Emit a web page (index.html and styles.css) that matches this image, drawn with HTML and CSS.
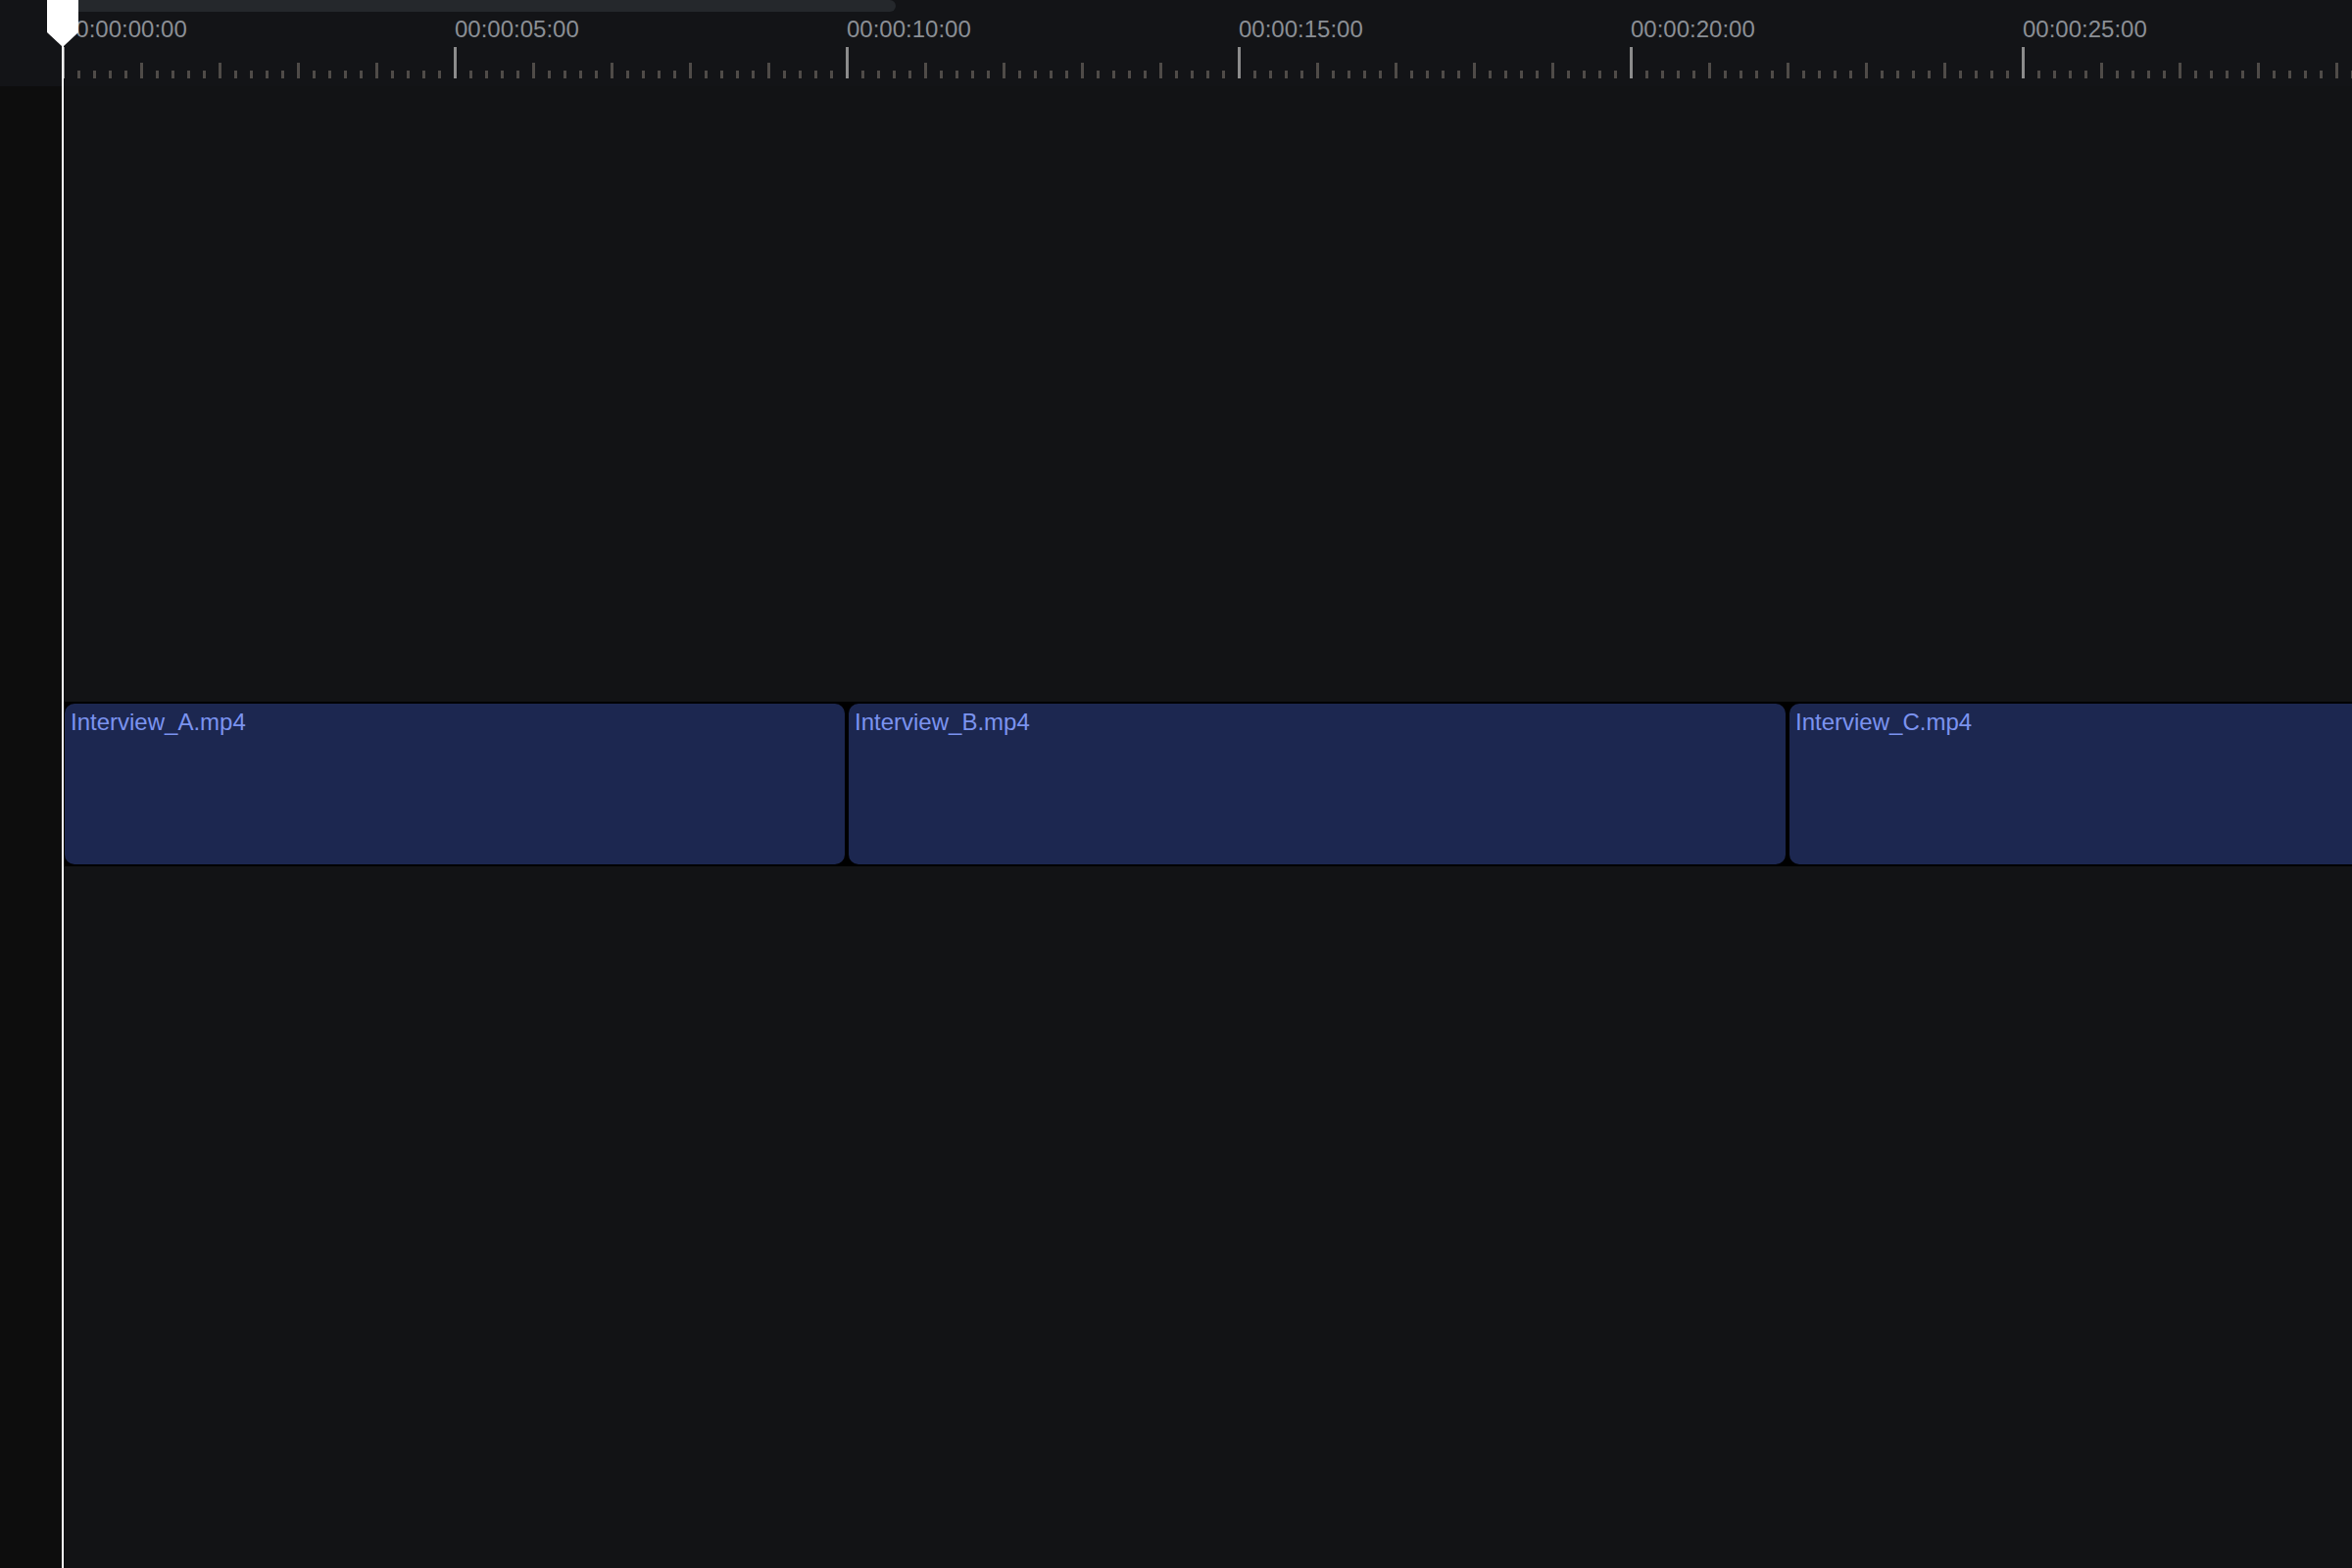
FILE: index.html
```html
<!DOCTYPE html>
<html lang="en">
<head>
    <meta charset="UTF-8">
    <meta name="viewport" content="width=device-width, initial-scale=1.0">
    <title>Timeline</title>
    <link rel="stylesheet" href="styles.css">
</head>
<body>

    <div class="timeline">
        <!-- Régua com o tempo -->
        <div class="ruler">
            <div class="scroll-thumb"></div>
            <div class="ruler-labels">
                <span class="ruler-label">00:00:00:00</span>
                <span class="ruler-label">00:00:05:00</span>
                <span class="ruler-label">00:00:10:00</span>
                <span class="ruler-label">00:00:15:00</span>
                <span class="ruler-label">00:00:20:00</span>
                <span class="ruler-label">00:00:25:00</span>
            </div>
            <div class="ruler-ticks"></div>
        </div>

        <!-- Faixas -->
        <div class="tracks">
            <div class="gutter"></div>
            <div class="track-area">
                <div class="lane">
                    <div class="clip clip-a">Interview_A.mp4</div>
                    <div class="clip clip-b">Interview_B.mp4</div>
                    <div class="clip clip-c">Interview_C.mp4</div>
                </div>
            </div>
        </div>

        <!-- Cursor de reprodução -->
        <div class="playhead">
            <svg class="playhead-handle" width="32" height="47" viewBox="0 0 32 47">
                <polygon points="0,0 32,0 32,33 17,47 15,47 0,33" fill="#ffffff"/>
            </svg>
            <div class="playhead-line"></div>
        </div>
    </div>

</body>
</html>
```

FILE: styles.css
```css
body {
    margin: 0;
    padding: 0;
    background-color: #121315;
    font-family: "Liberation Sans", Arial, sans-serif;
    overflow: hidden;
}

.timeline {
    position: relative;
    width: 2400px;
    height: 1600px;
    overflow: hidden;
    display: flex;
    flex-direction: column;
}

.ruler {
    height: 88px;
    flex-shrink: 0;
    background-color: #131417;
    overflow: hidden;
}

.scroll-thumb {
    margin-left: 64px;
    width: 850px;
    height: 12px;
    background-color: #25282c;
    border-radius: 0 6px 6px 0;
}

.ruler-labels {
    display: flex;
    margin-top: 6px;
    margin-left: 64px;
    height: 24px;
    white-space: nowrap;
}

.ruler-label {
    flex: 0 0 400px;
    font-size: 24px;
    line-height: 24px;
    color: #8b8f95;
}

.ruler-ticks {
    margin-top: 6px;
    margin-left: 63px;
    height: 32px;
    background:
        repeating-linear-gradient(to right, #8c8c8c 0 3px, transparent 3px 400px) 0 0 / 100% 32px no-repeat,
        repeating-linear-gradient(to right, #4f4b48 0 3px, transparent 3px 80px) 0 16px / 100% 16px no-repeat,
        repeating-linear-gradient(to right, #4f4b48 0 3px, transparent 3px 16px) 0 24px / 100% 8px no-repeat;
}

.tracks {
    flex: 1;
    display: flex;
}

.gutter {
    width: 64px;
    flex-shrink: 0;
    background-color: #0d0d0d;
}

.track-area {
    flex: 1;
    background-color: #121315;
    overflow: hidden;
}

.lane {
    display: flex;
    margin-top: 628px;
    height: 168px;
    background-color: #000;
}

.clip {
    box-sizing: border-box;
    flex-shrink: 0;
    height: 168px;
    padding: 7px 6px;
    border: 2px solid #000;
    border-radius: 12px;
    background-color: #1c2750;
    color: #7b93ef;
    font-size: 24px;
    line-height: 24px;
    white-space: nowrap;
}

.clip-a {
    width: 800px;
}

.clip-b {
    width: 960px;
}

.clip-c {
    width: 960px;
}

.playhead {
    position: absolute;
    top: 0;
    left: 48px;
    width: 32px;
    height: 1600px;
}

.playhead-handle {
    display: block;
}

.playhead-line {
    position: absolute;
    left: 15px;
    top: 46px;
    bottom: 0;
    width: 2px;
    background-color: #fff;
}
```
